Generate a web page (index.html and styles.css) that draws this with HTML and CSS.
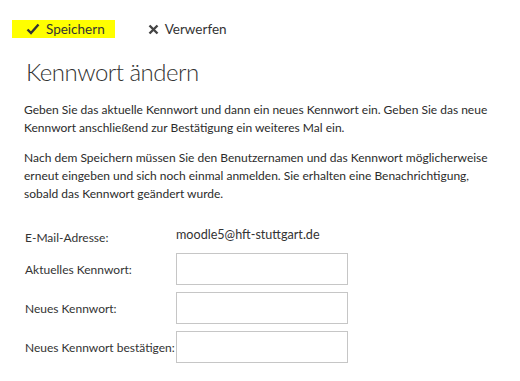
FILE: index.html
```html
<!DOCTYPE html>
<html lang="de">
<head>
    <meta charset="UTF-8">
    <title>Kennwort ändern</title>
    <link rel="stylesheet" href="styles.css">
</head>
<body>
    <div class="toolbar">
        <span class="action action-save">
            <svg class="icon" width="14" height="12" viewBox="0 0 14 12">
                <path d="M1.5 6.5 L5 10 L12.5 1.5" fill="none" stroke="#333" stroke-width="2.4"/>
            </svg>
            Speichern
        </span>
        <span class="action">
            <svg class="icon" width="11" height="11" viewBox="0 0 11 11">
                <path d="M1.5 1.5 L9.5 9.5 M9.5 1.5 L1.5 9.5" fill="none" stroke="#444" stroke-width="2.4"/>
            </svg>
            Verwerfen
        </span>
    </div>

    <h1 class="title">Kennwort ändern</h1>

    <p class="info">Geben Sie das aktuelle Kennwort und dann ein neues Kennwort ein. Geben Sie das neue Kennwort anschließend zur Bestätigung ein weiteres Mal ein.</p>
    <p class="info">Nach dem Speichern müssen Sie den Benutzernamen und das Kennwort möglicherweise erneut eingeben und sich noch einmal anmelden. Sie erhalten eine Benachrichtigung, sobald das Kennwort geändert wurde.</p>

    <div class="form">
        <div class="row row-mail">
            <label class="label">E-Mail-Adresse:</label>
            <span class="value">moodle5@hft-stuttgart.de</span>
        </div>
        <div class="row">
            <label class="label">Aktuelles Kennwort:</label>
            <input class="field" type="password">
        </div>
        <div class="row">
            <label class="label">Neues Kennwort:</label>
            <input class="field" type="password">
        </div>
        <div class="row">
            <label class="label">Neues Kennwort bestätigen:</label>
            <input class="field" type="password">
        </div>
    </div>
</body>
</html>
```

FILE: styles.css
```css
* {
    margin: 0;
    padding: 0;
    box-sizing: border-box;
}

body {
    background: #fff;
    color: #333;
    font-family: 'Lato', 'Open Sans', sans-serif;
    font-size: 12px;
    padding: 20px 0 0 24px;
}

.toolbar {
    display: flex;
    align-items: center;
    height: 18px;
    margin-left: -12px;
    gap: 19px;
}

.action {
    display: flex;
    align-items: center;
    gap: 6px;
    height: 18px;
    padding: 0 10px 0 14px;
    font-size: 13.5px;
    color: #333;
}

.action-save {
    background: #ffff00;
    color: #333;
}

.icon {
    display: block;
}

.title {
    font-weight: 300;
    font-size: 24px;
    letter-spacing: -0.5px;
    color: #333;
    margin-top: 16px;
    margin-left: 2px;
    line-height: 36px;
}

.info {
    line-height: 18px;
    color: #2b2b2b;
    margin-top: 11px;
    width: 480px;
}

.info + .info {
    margin-top: 12px;
}

.form {
    margin-top: 27px;
    padding-left: 1px;
    display: flex;
    flex-direction: column;
    gap: 7px;
}

.row {
    display: flex;
    align-items: center;
}

.row-mail {
    align-items: flex-start;
    height: 16px;
}

.label {
    width: 151px;
    white-space: nowrap;
    color: #333;
}

.value {
    font-size: 12.6px;
    line-height: 18px;
    margin-top: -4px;
}

.field {
    width: 172px;
    height: 32px;
    border: 1px solid #c6c6c6;
    background: #fff;
}
```
